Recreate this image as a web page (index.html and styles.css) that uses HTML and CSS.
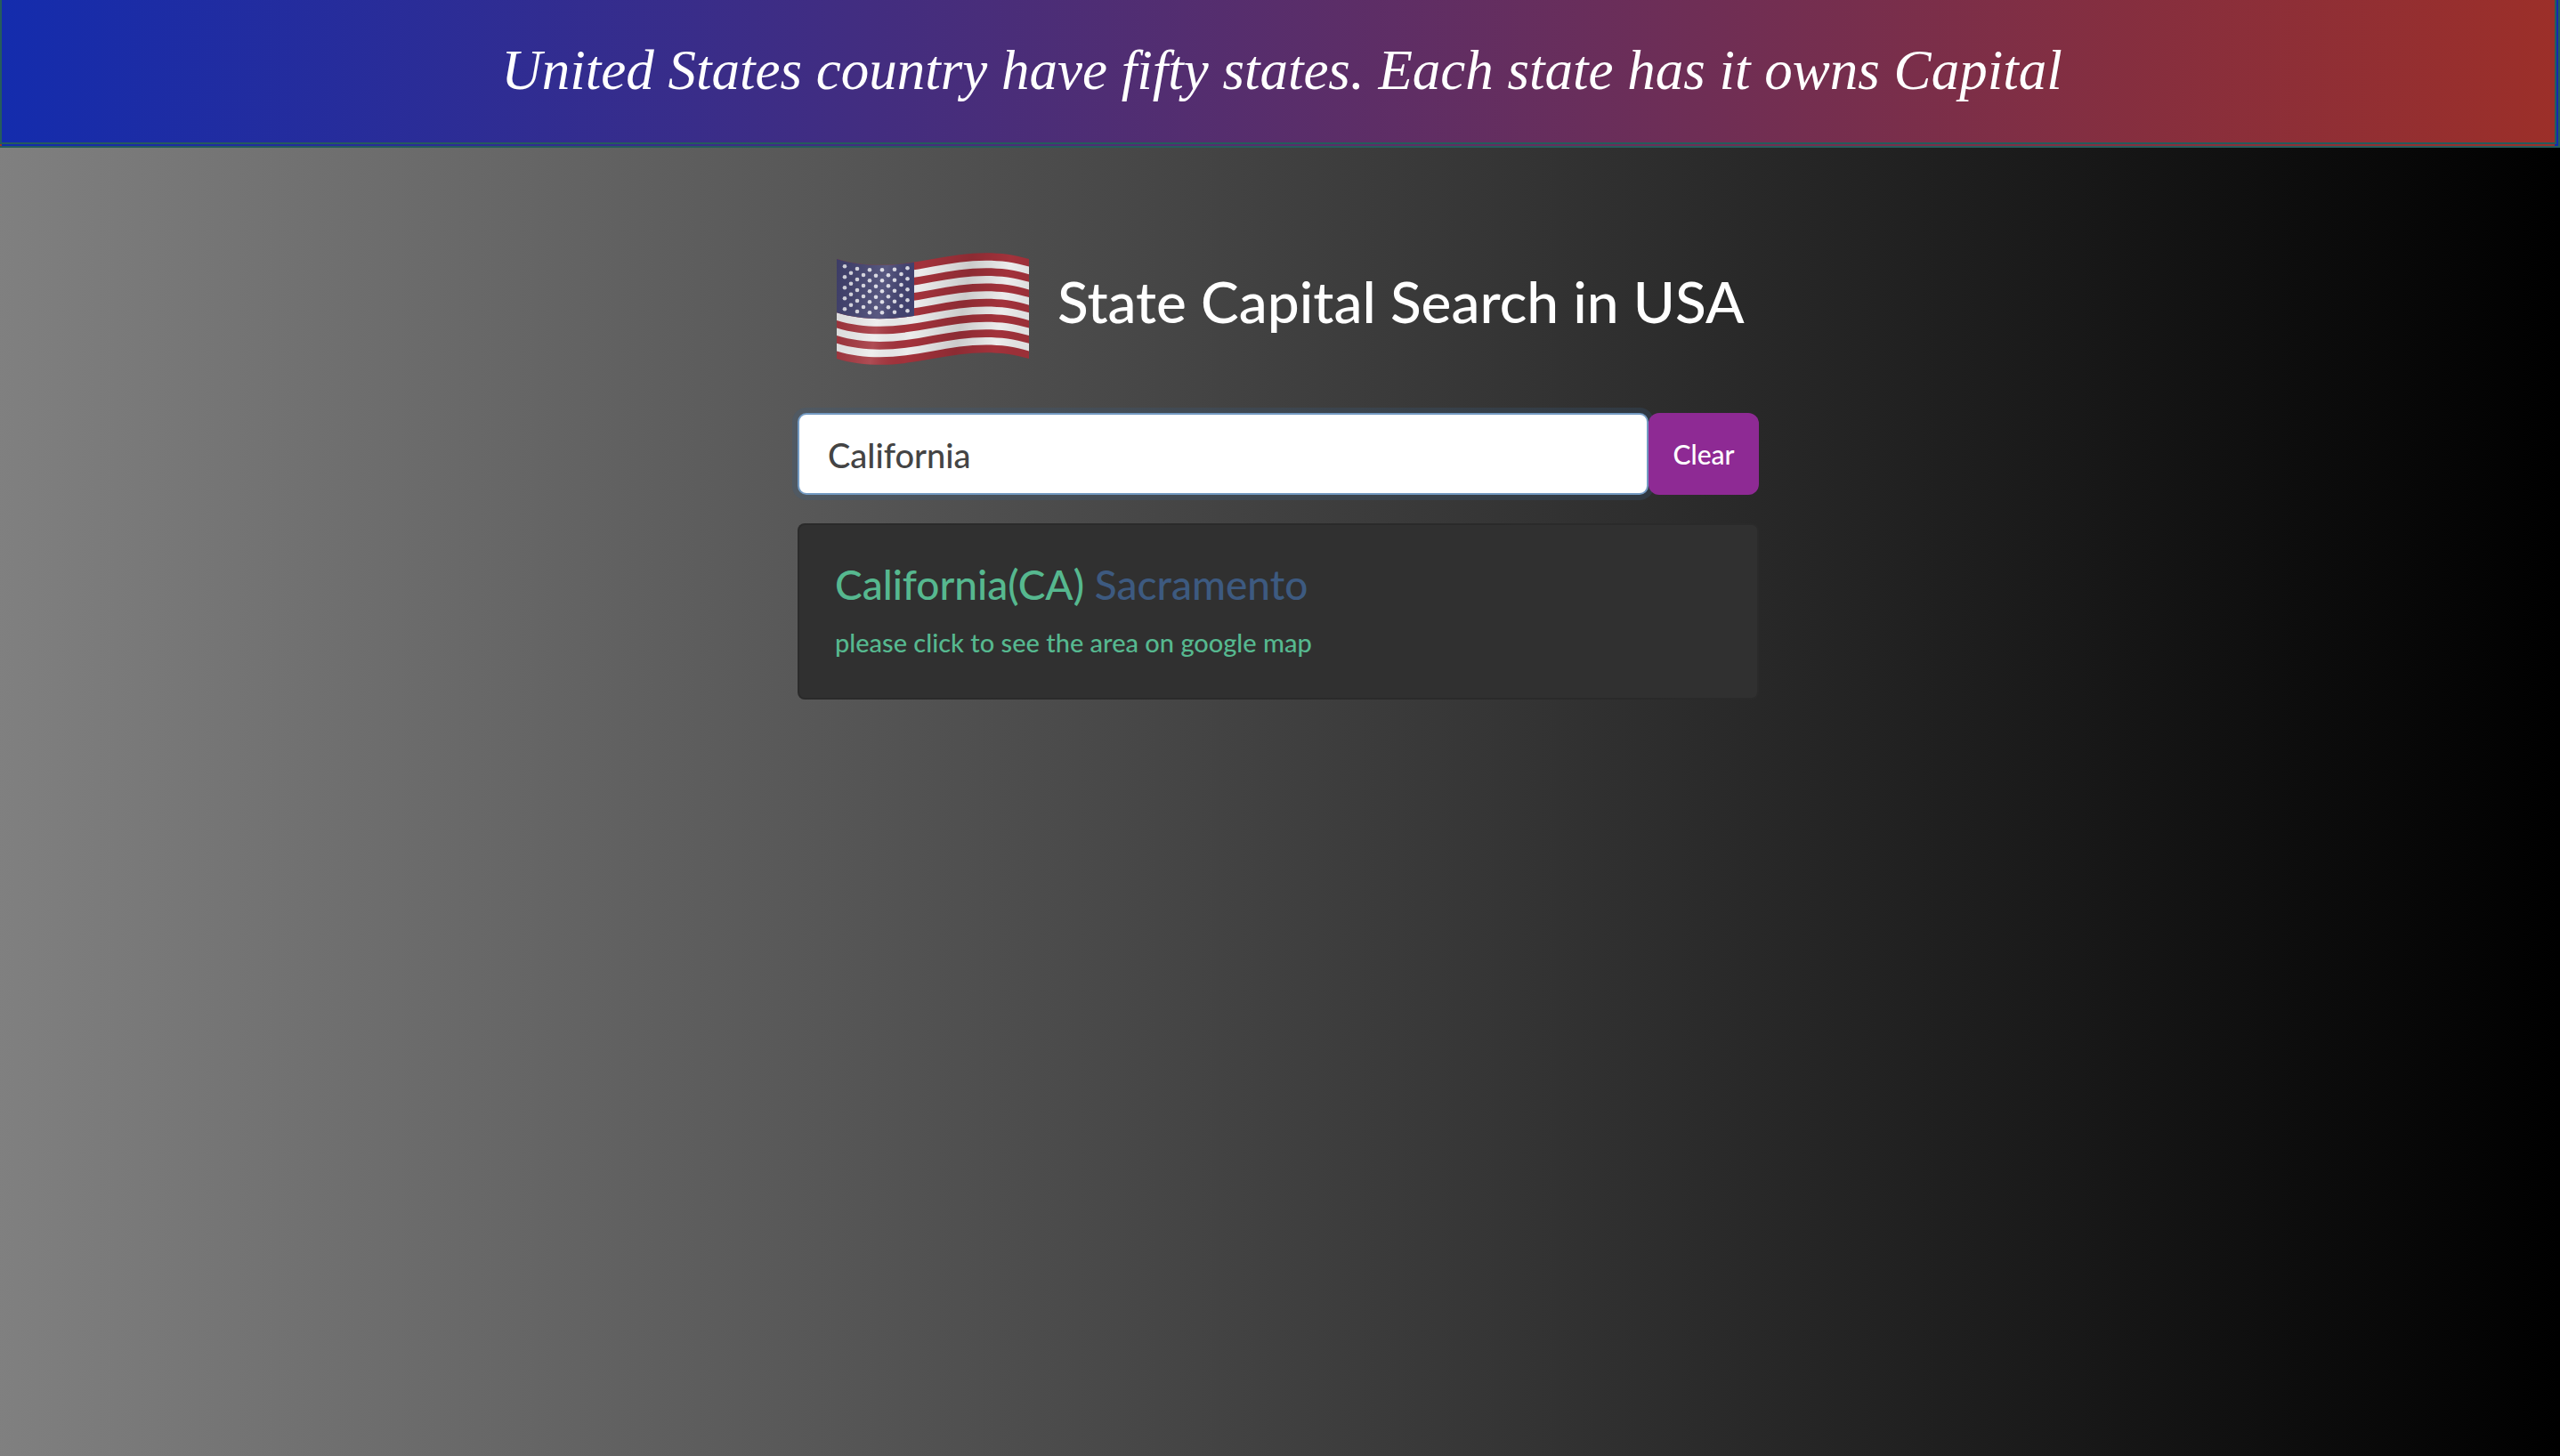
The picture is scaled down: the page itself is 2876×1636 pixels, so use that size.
FILE: index.html
```html
<!DOCTYPE html>
<html lang="en">
<head>
<meta charset="utf-8">
<meta name="viewport" content="width=device-width, initial-scale=1">
<title>State Capital Search</title>
<link rel="stylesheet" href="styles.css">
</head>
<body>
<header class="banner">
  <h1 class="banner-title">United States country have fifty states. Each state has it owns Capital</h1>
</header>
<main class="search">
  <h2 class="search-title">
    <svg class="flag" viewBox="0 0 216 126" role="img" aria-label="Flag of the United States">
      <defs>
        <clipPath id="canton"><rect width="87" height="126"/></clipPath>
        <linearGradient id="shade" x1="0" x2="1" y1="0" y2="0.1">
          <stop offset="0" stop-color="#000" stop-opacity=".08"/>
          <stop offset=".27" stop-color="#fff" stop-opacity=".13"/>
          <stop offset=".45" stop-color="#000" stop-opacity="0"/>
          <stop offset=".7" stop-color="#000" stop-opacity=".14"/>
          <stop offset=".9" stop-color="#000" stop-opacity="0"/>
          <stop offset="1" stop-color="#000" stop-opacity=".05"/>
        </linearGradient>
        <path id="stripe" d="M0 7C36 18 72 14 108 7C144 0 180-4 216 7V15.6C180 4.6 144 8.6 108 15.6C72 22.6 36 26.6 0 15.6Z"/>
        <g id="six"><circle cx="9" cy="15.3" r="2.3"/><circle cx="23" cy="18" r="2.3"/><circle cx="37" cy="19.3" r="2.3"/><circle cx="51" cy="19.3" r="2.3"/><circle cx="65" cy="18.7" r="2.3"/><circle cx="79.5" cy="17.3" r="2.3"/></g>
        <g id="five"><circle cx="16" cy="22.7" r="2.3"/><circle cx="30" cy="25" r="2.3"/><circle cx="44" cy="25.7" r="2.3"/><circle cx="58" cy="25.2" r="2.3"/><circle cx="72.5" cy="24" r="2.3"/></g>
      </defs>
      <path fill="#a3323b" d="M0 7C36 18 72 14 108 7C144 0 180-4 216 7V119C180 108 144 112 108 119C72 126 36 130 0 119Z"/>
      <g fill="#ececec">
        <use href="#stripe" y="8.6"/><use href="#stripe" y="25.8"/><use href="#stripe" y="43.1"/><use href="#stripe" y="60.3"/><use href="#stripe" y="77.5"/><use href="#stripe" y="94.8"/>
      </g>
      <path fill="#41416f" clip-path="url(#canton)" d="M0 7C36 18 72 14 108 7V67.3C72 74.3 36 78.3 0 67.3Z"/>
      <g fill="#dcdce6">
        <use href="#six"/><use href="#six" y="12"/><use href="#six" y="24"/><use href="#six" y="36"/><use href="#six" y="48"/>
        <use href="#five"/><use href="#five" y="12"/><use href="#five" y="24"/><use href="#five" y="36"/>
      </g>
      <path fill="url(#shade)" d="M0 7C36 18 72 14 108 7C144 0 180-4 216 7V119C180 108 144 112 108 119C72 126 36 130 0 119Z"/>
    </svg>
    State Capital Search in USA
  </h2>
  <form class="search-form">
    <input class="search-input" type="text" value="California" aria-label="State or capital">
    <button class="clear-button" type="button">Clear</button>
  </form>
  <article class="card">
    <h3 class="card-title">California(CA) <span class="capital">Sacramento</span></h3>
    <a class="card-link" href="#map">please click to see the area on google map</a>
  </article>
</main>
</body>
</html>
```
FILE: styles.css
```css
* { box-sizing: border-box; }

html { background: #000; }

body {
  margin: -6px 0 0 -4px;
  min-height: calc(100vh + 6px);
  background: linear-gradient(to right, #808080, #000) no-repeat;
  font-family: Lato, sans-serif;
  font-size: 30px;
  font-weight: 500;
  line-height: 1.5;
  color: #fff;
}

.banner {
  border: 6px double #255c5c;
  background: linear-gradient(to right, #142cad, #9c2f29);
  padding: 32px 32px 34px 40px;
  text-align: center;
}

.banner-title {
  margin: 0;
  font-family: "Apple Chancery", "Liberation Serif", serif;
  font-style: italic;
  font-weight: 400;
  font-size: 63px;
  line-height: 94px;
}

.search {
  width: 1080px;
  max-width: 100%;
  margin: 0 auto;
  padding-top: 118px;
}

.search-title {
  display: flex;
  align-items: flex-start;
  gap: 32px;
  margin: 0 0 54px;
  padding-left: 44px;
  font-size: 64px;
  font-weight: 500;
  line-height: 110px;
}

.flag {
  flex: none;
  width: 216px;
  height: 126px;
}

.search-form {
  display: flex;
  margin: 0 0 32px;
}

.search-input {
  flex: 1;
  min-width: 0;
  height: 92px;
  padding: 18px 32px 16px;
  border: 2px solid #739ac2;
  border-radius: 10px;
  outline: none;
  background: #fff;
  box-shadow: 0 0 0 6px rgba(55, 90, 127, .25);
  color: #444;
  font: inherit;
  font-size: 38px;
}

.clear-button {
  position: relative;
  width: 124px;
  border: 0;
  border-radius: 12px;
  background: #8e2a94;
  color: #fff;
  font: inherit;
}

.card {
  padding: 40px;
  border: 2px solid rgba(0, 0, 0, .125);
  border-radius: 8px;
  background: #303030;
}

.card-title {
  margin: 0 0 16px;
  color: #56b88f;
  font-size: 46px;
  font-weight: 500;
  line-height: 54px;
}

.capital { color: #3d5a80; }

.card-link {
  display: block;
  color: #56b88f;
  font-size: 29px;
  line-height: 44px;
  text-decoration: none;
}
```
